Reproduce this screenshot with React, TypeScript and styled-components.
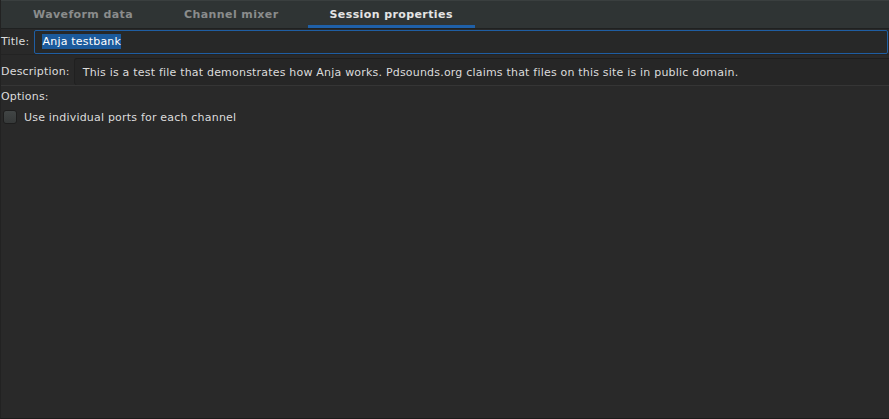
import React from "react";
import styled, { createGlobalStyle } from "styled-components";

const Global = createGlobalStyle`
  html, body { margin: 0; padding: 0; background: #292929; }
  body { font-family: "DejaVu Sans", "Liberation Sans", sans-serif; font-size: 11px; color: #dcdcdc; }
  * { box-sizing: border-box; }
`;

const Frame = styled.div`
  width: 889px;
  height: 419px;
  background: #292929;
  border-left: 1px solid #222;
  border-bottom: 1px solid #1c1c1c;
  display: flex;
  flex-direction: column;
`;

const TabBar = styled.div`
  height: 29px;
  background: #2f3434;
  border-top: 1px solid #3a3f3f;
  border-bottom: 1px solid #1f2121;
  display: flex;
  align-items: stretch;
  gap: 7px;
  padding-left: 10px;
`;

const Tab = styled.div<{ $active?: boolean }>`
  padding: 3px 22px 0 22px;
  display: flex;
  align-items: center;
  font-weight: bold;
  font-size: 11px;
  letter-spacing: 0.4px;
  color: ${(p) => (p.$active ? "#e4e4e4" : "#8a8c8c")};
  border-bottom: 3px solid ${(p) => (p.$active ? "#1f60a8" : "transparent")};
`;

const Body = styled.div`
  display: flex;
  flex-direction: column;
  letter-spacing: 0.2px;
`;

const Row = styled.div`
  display: flex;
  align-items: center;
`;

const Label = styled.span`
  color: #dcdcdc;
  white-space: nowrap;
`;

const TitleRow = styled(Row)`
  height: 26px;
  gap: 5px;
  padding-right: 1px;
  border-bottom: 1px solid #232323;
`;

const TitleInput = styled.div`
  flex: 1;
  height: 24px;
  background: #272828;
  border: 1px solid #1f5ea3;
  border-radius: 2px;
  display: flex;
  align-items: center;
  padding-left: 7px;
`;

const Selected = styled.span`
  background: #1b5a9c;
  color: #ffffff;
  padding: 1px 0;
`;

const DescRow = styled(Row)`
  height: 31px;
  gap: 4px;
  padding-top: 3px;
  border-bottom: 1px solid #353535;
`;

const DescField = styled.div`
  flex: 1;
  height: 27px;
  background: #262626;
  border-top: 1px solid #1d1d1d;
  border-left: 1px solid #202020;
  border-radius: 3px 0 0 3px;
  display: flex;
  align-items: center;
  padding-left: 8px;
  white-space: nowrap;
`;

const OptionsRow = styled(Row)`
  height: 20px;
  padding-top: 1px;
`;

const CheckRow = styled(Row)`
  height: 22px;
  gap: 7px;
  padding-left: 2px;
`;

const Check = styled.span`
  width: 14px;
  height: 14px;
  border-radius: 3px;
  border: 1px solid #1e1e1e;
  background: linear-gradient(#414545, #363939);
  display: inline-block;
`;

export default function App() {
  return (
    <>
      <Global />
      <Frame>
        <TabBar>
          <Tab>Waveform data</Tab>
          <Tab>Channel mixer</Tab>
          <Tab $active>Session properties</Tab>
        </TabBar>
        <Body>
          <TitleRow>
            <Label>Title:</Label>
            <TitleInput>
              <Selected>Anja testbank</Selected>
            </TitleInput>
          </TitleRow>
          <DescRow>
            <Label>Description:</Label>
            <DescField>
              This is a test file that demonstrates how Anja works. Pdsounds.org claims that files on this site is in public domain.
            </DescField>
          </DescRow>
          <OptionsRow>
            <Label>Options:</Label>
          </OptionsRow>
          <CheckRow>
            <Check />
            <Label>Use individual ports for each channel</Label>
          </CheckRow>
        </Body>
      </Frame>
    </>
  );
}
